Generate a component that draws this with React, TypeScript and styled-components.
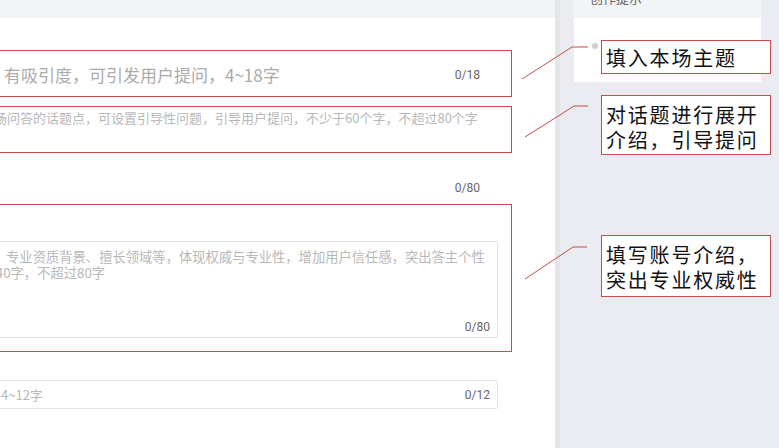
import React from "react";
import styled, { createGlobalStyle } from "styled-components";

const GlobalStyle = createGlobalStyle`
  html, body { margin: 0; padding: 0; }
  body {
    width: 779px;
    height: 448px;
    overflow: hidden;
    background: #fff;
    font-family: "Noto Sans CJK SC", "Noto Sans", sans-serif;
  }
`;

const RED = "#c0504d";

const Page = styled.div`
  position: relative;
  display: flex;
  width: 779px;
  height: 448px;
  overflow: hidden;
`;

const Main = styled.main`
  width: 555px;
  flex: none;
  display: flex;
  flex-direction: column;
  background: #fff;
  overflow: hidden;
`;

const TopBar = styled.div`
  flex: none;
  height: 18px;
  background: #f3f4f6;
`;

const FormColumn = styled.div`
  margin-left: -120px;
  width: 632px;
  display: flex;
  flex-direction: column;
`;

const TitleFrame = styled.div`
  margin-top: 32px;
  height: 47px;
  box-sizing: border-box;
  border: 1px solid ${RED};
  display: flex;
  align-items: center;
  justify-content: space-between;
  padding: 3px 31px 0 4px;
`;

const Placeholder = styled.span<{ $size: number; $tone?: string }>`
  font-size: ${(p) => p.$size}px;
  line-height: 18px;
  color: ${(p) => p.$tone ?? "#b8b8b8"};
  white-space: pre;
`;

const Counter = styled.span`
  font-family: Roboto, "Noto Sans", sans-serif;
  font-size: 12px;
  line-height: 14px;
  color: #666;
  white-space: nowrap;
`;

const DescFrame = styled.div`
  margin-top: 9px;
  height: 47px;
  box-sizing: border-box;
  border: 1px solid ${RED};
  padding: 2px 0 0 35px;
  display: flex;
  align-items: flex-start;
`;

const CounterRow = styled.div`
  margin-top: 27px;
  height: 16px;
  display: flex;
  align-items: center;
  justify-content: flex-end;
  padding-right: 32px;
`;

const IntroFrame = styled.div`
  margin-top: 8px;
  height: 148px;
  box-sizing: border-box;
  border: 1px solid ${RED};
  padding: 36px 13px 12px 23px;
  display: flex;
  flex-direction: column;
`;

const TextBox = styled.div`
  height: 97px;
  box-sizing: border-box;
  border: 1px solid #e4e4e4;
  border-radius: 2px;
  padding: 7px 7px 3px 8px;
  display: flex;
  flex-direction: column;
  justify-content: space-between;
`;

const BoxText = styled.div`
  font-size: 13.3px;
  line-height: 16px;
  color: #b8b8b8;
  white-space: pre;
`;

const BoxCounter = styled(Counter)`
  align-self: flex-end;
`;

const NameInput = styled.div`
  margin: 28px 14px 0 24px;
  height: 29px;
  box-sizing: border-box;
  border: 1px solid #e4e4e4;
  border-radius: 2px;
  display: flex;
  align-items: center;
  justify-content: space-between;
  padding: 0 7px 0 18px;
`;

const Sidebar = styled.aside`
  flex: 1;
  background: #ebecf1;
  border-left: 5px solid #e5e6ec;
  padding-left: 14px;
`;

const TipCard = styled.section`
  width: 187px;
  margin-top: -18px;
  display: flex;
  flex-direction: column;
`;

const TipHeader = styled.div`
  height: 36px;
  background: #f3f4f6;
  padding-left: 16px;
  line-height: 32px;
  font-size: 13px;
  color: #666;
`;

const TipBody = styled.div`
  height: 64px;
  background: #fff;
  box-sizing: border-box;
  padding: 20px 0 0 18px;
`;

const TipRow = styled.div`
  display: flex;
  align-items: center;
  gap: 7px;
  line-height: 16px;
  font-size: 13px;
  color: #9a9a9a;
`;

const Dot = styled.span`
  width: 6px;
  height: 6px;
  border-radius: 50%;
  background: #cfcfcf;
  flex: none;
`;

const Overlay = styled.div`
  position: absolute;
  inset: 0;
  pointer-events: none;
`;

const Leaders = styled.svg`
  position: absolute;
  left: 0;
  top: 0;
`;

const Callout = styled.div<{ $top: number; $h: number; $pt: number }>`
  position: absolute;
  left: 601px;
  top: ${(p) => p.$top}px;
  width: 170px;
  height: ${(p) => p.$h}px;
  box-sizing: border-box;
  border: 1px solid ${RED};
  background: #fff;
  padding: ${(p) => p.$pt}px 0 0 4px;
  font-size: 20px;
  line-height: 25px;
  letter-spacing: 1.8px;
  color: #111;
  white-space: pre;
`;

const callouts = [
  { top: 40, h: 34, pt: 4, text: "填入本场主题" },
  { top: 95, h: 60, pt: 6, text: "对话题进行展开\n介绍，引导提问" },
  { top: 235, h: 62, pt: 6, text: "填写账号介绍，\n突出专业权威性" },
];

const leaders = [
  "522,79 572,47 588,47",
  "525,137 574,106 588,106",
  "525,279 573,247 587,247",
];

export default function App() {
  return (
    <>
      <GlobalStyle />
      <Page>
        <Main>
          <TopBar />
          <FormColumn>
            <TitleFrame>
              <Placeholder $size={17} $tone="#ababab">
                标题简洁明了，有吸引度，可引发用户提问，4~18字
              </Placeholder>
              <Counter>0/18</Counter>
            </TitleFrame>
            <DescFrame>
              <Placeholder $size={13}>
                请简要介绍本场问答的话题点，可设置引导性问题，引导用户提问，不少于60个字，不超过80个字
              </Placeholder>
            </DescFrame>
            <CounterRow>
              <Counter>0/80</Counter>
            </CounterRow>
            <IntroFrame>
              <TextBox>
                <BoxText>
                  {"介绍账号身份、专业资质背景、擅长领域等，体现权威与专业性，增加用户信任感，突出答主个性\n特色，不少于 40字，不超过80字"}
                </BoxText>
                <BoxCounter>0/80</BoxCounter>
              </TextBox>
            </IntroFrame>
            <NameInput>
              <Placeholder $size={13}>请输入昵称，4~12字</Placeholder>
              <Counter>0/12</Counter>
            </NameInput>
          </FormColumn>
        </Main>
        <Sidebar>
          <TipCard>
            <TipHeader>创作提示</TipHeader>
            <TipBody>
              <TipRow>
                <Dot />
                创作一个有吸引力的主题
              </TipRow>
            </TipBody>
          </TipCard>
        </Sidebar>
        <Overlay>
          <Leaders width="779" height="448" viewBox="0 0 779 448">
            {leaders.map((pts) => (
              <polyline key={pts} points={pts} fill="none" stroke={RED} strokeWidth="1" />
            ))}
          </Leaders>
          {callouts.map((c) => (
            <Callout key={c.top} $top={c.top} $h={c.h} $pt={c.pt}>
              {c.text}
            </Callout>
          ))}
        </Overlay>
      </Page>
    </>
  );
}
